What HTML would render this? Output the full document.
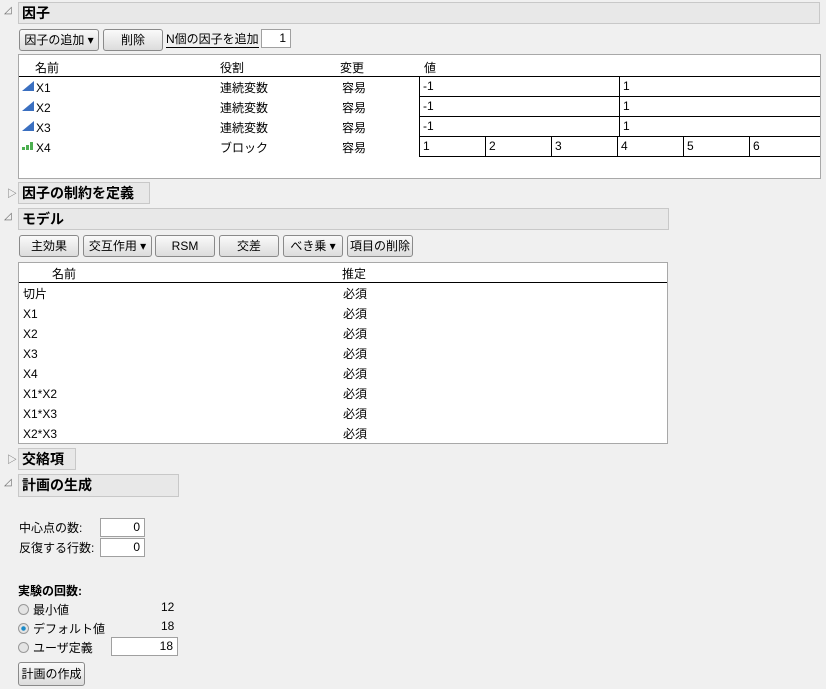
<!DOCTYPE html>
<html><head><meta charset="utf-8"><style>
*{box-sizing:border-box;margin:0;padding:0}
body{width:826px;height:689px;background:#f0f0f0;font-family:"Liberation Sans","Noto Sans CJK JP",sans-serif;font-size:12px;color:#000;position:relative;overflow:hidden}
.a{position:absolute;white-space:nowrap}
.hdr{position:absolute;background:#e8e8e8;border:1px solid #c8c8c8;font-weight:bold;font-size:14px;padding:1px 3px;line-height:18px}
.tri{position:absolute;font-size:10px;color:#666}
.btn{position:absolute;height:22px;border:1px solid #8a8a8a;border-radius:3px;background:linear-gradient(#fafafa,#dcdcdc);text-align:center;line-height:20px;font-size:12px}
.box{position:absolute;background:#fff;border:1px solid #a8a8a8}
.inp{position:absolute;background:#fff;border:1px solid #a0a0a0;text-align:right;padding-right:4px;line-height:17px;height:19px}
.cell{position:absolute;border-left:1px solid #000;border-bottom:1px solid #000;height:20px;line-height:19px;padding-left:3px}
.rad{position:absolute;width:11px;height:11px;border-radius:50%;border:1px solid #999;background:#e4e4e4}
</style></head><body>
<div class="tri" style="left:4px;top:5px">◿</div>
<div class="hdr" style="left:18px;top:2px;width:802px;height:22px">因子</div>
<div class="btn" style="left:19px;top:29px;width:80px">因子の追加 ▾</div>
<div class="btn" style="left:103px;top:29px;width:60px">削除</div>
<div class="a" style="left:166px;top:31px;border-bottom:1px solid #000;line-height:16px">N個の因子を追加</div>
<div class="inp" style="left:261px;top:29px;width:30px">1</div>
<div class="box" style="left:18px;top:54px;width:803px;height:125px"></div>
<div class="a" style="left:35px;top:59px">名前</div>
<div class="a" style="left:220px;top:59px">役割</div>
<div class="a" style="left:340px;top:59px">変更</div>
<div class="a" style="left:424px;top:59px">値</div>
<div class="a" style="left:19px;top:76px;width:801px;border-top:1px solid #000"></div>
<svg class="a" style="left:22px;top:81px" width="14" height="70">
<polygon points="0,10 12,0 12,10" fill="#3a6fc0"/><polygon points="0,30 12,20 12,30" fill="#3a6fc0"/><polygon points="0,50 12,40 12,50" fill="#3a6fc0"/>
<rect x="0" y="66" width="3" height="3" fill="#4caf50"/><rect x="4" y="64" width="3" height="5" fill="#4caf50"/><rect x="8" y="61" width="3" height="8" fill="#4caf50"/></svg>
<div class="a" style="left:36px;top:81px;line-height:14px">X1</div>
<div class="a" style="left:36px;top:101px;line-height:14px">X2</div>
<div class="a" style="left:36px;top:121px;line-height:14px">X3</div>
<div class="a" style="left:36px;top:141px;line-height:14px">X4</div>
<div class="a" style="left:220px;top:81px;line-height:14px">連続変数</div>
<div class="a" style="left:220px;top:101px;line-height:14px">連続変数</div>
<div class="a" style="left:220px;top:121px;line-height:14px">連続変数</div>
<div class="a" style="left:220px;top:141px;line-height:14px">ブロック</div>
<div class="a" style="left:342px;top:81px;line-height:14px">容易</div>
<div class="a" style="left:342px;top:101px;line-height:14px">容易</div>
<div class="a" style="left:342px;top:121px;line-height:14px">容易</div>
<div class="a" style="left:342px;top:141px;line-height:14px">容易</div>
<div class="cell" style="left:419px;top:77px;width:200px">-1</div><div class="cell" style="left:619px;top:77px;width:201px">1</div>
<div class="cell" style="left:419px;top:97px;width:200px">-1</div><div class="cell" style="left:619px;top:97px;width:201px">1</div>
<div class="cell" style="left:419px;top:117px;width:200px">-1</div><div class="cell" style="left:619px;top:117px;width:201px">1</div>
<div class="cell" style="left:419px;top:137px;width:66px">1</div><div class="cell" style="left:485px;top:137px;width:66px">2</div><div class="cell" style="left:551px;top:137px;width:66px">3</div><div class="cell" style="left:617px;top:137px;width:66px">4</div><div class="cell" style="left:683px;top:137px;width:66px">5</div><div class="cell" style="left:749px;top:137px;width:71px">6</div>

<div class="tri" style="left:7px;top:185px">▷</div>
<div class="hdr" style="left:18px;top:182px;width:132px;height:22px">因子の制約を定義</div>
<div class="tri" style="left:4px;top:211px">◿</div>
<div class="hdr" style="left:18px;top:208px;width:651px;height:22px">モデル</div>
<div class="btn" style="left:19px;top:235px;width:60px">主効果</div>
<div class="btn" style="left:83px;top:235px;width:69px">交互作用 ▾</div>
<div class="btn" style="left:155px;top:235px;width:60px">RSM</div>
<div class="btn" style="left:219px;top:235px;width:60px">交差</div>
<div class="btn" style="left:283px;top:235px;width:60px">べき乗 ▾</div>
<div class="btn" style="left:347px;top:235px;width:66px">項目の削除</div>
<div class="box" style="left:18px;top:262px;width:650px;height:182px"></div>
<div class="a" style="left:52px;top:265px">名前</div>
<div class="a" style="left:342px;top:265px">推定</div>
<div class="a" style="left:19px;top:282px;width:648px;border-top:1px solid #000"></div>
<div class="a" style="left:23px;top:284px;line-height:20px">切片<br>X1<br>X2<br>X3<br>X4<br>X1*X2<br>X1*X3<br>X2*X3</div>
<div class="a" style="left:343px;top:284px;line-height:20px">必須<br>必須<br>必須<br>必須<br>必須<br>必須<br>必須<br>必須</div>

<div class="tri" style="left:7px;top:451px">▷</div>
<div class="hdr" style="left:18px;top:448px;width:58px;height:22px">交絡項</div>
<div class="tri" style="left:4px;top:477px">◿</div>
<div class="hdr" style="left:18px;top:474px;width:161px;height:23px">計画の生成</div>
<div class="a" style="left:19px;top:519px">中心点の数:</div>
<div class="inp" style="left:100px;top:518px;width:45px">0</div>
<div class="a" style="left:19px;top:539px">反復する行数:</div>
<div class="inp" style="left:100px;top:538px;width:45px">0</div>
<div class="a" style="left:18px;top:582px;font-weight:bold">実験の回数:</div>
<div class="rad" style="left:18px;top:604px"></div><div class="a" style="left:33px;top:601px">最小値</div><div class="a" style="left:161px;top:600px">12</div>
<div class="rad" style="left:18px;top:623px;background:radial-gradient(#1a8ac8 30%,#e4e4e4 40%)"></div><div class="a" style="left:33px;top:620px">デフォルト値</div><div class="a" style="left:161px;top:619px">18</div>
<div class="rad" style="left:18px;top:642px"></div><div class="a" style="left:33px;top:639px">ユーザ定義</div>
<div class="inp" style="left:111px;top:637px;width:67px">18</div>
<div class="btn" style="left:18px;top:662px;width:67px;height:24px;line-height:22px">計画の作成</div>
</body></html>
